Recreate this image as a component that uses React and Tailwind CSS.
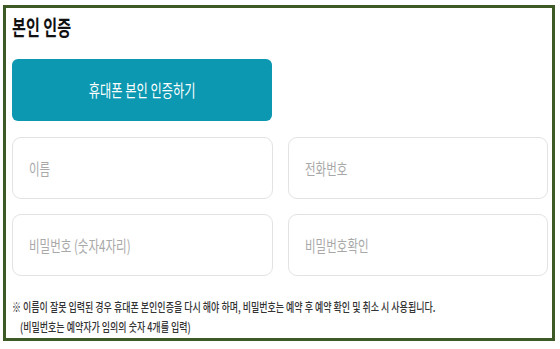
export default function App() {
    const font = {fontFamily: '"Noto Sans CJK KR", "Noto Sans", sans-serif'};
    return (
        <div className="w-[560px] h-[349px] bg-white pt-[5px] pl-[3px] overflow-hidden" style={font}>
            <div className="w-[552px] h-[336px] border-[3px] border-[#3d5a26] bg-white overflow-hidden">
                <div className="ml-[6px] w-[536px] pt-[4px]">
                    <h1 className="h-[28px] text-[21px] leading-[28px] font-bold text-[#111] whitespace-nowrap">
                        <span className="inline-block origin-left scale-x-[0.72]">본인 인증</span>
                    </h1>

                    <button className="mt-[19px] w-[260px] h-[62px] rounded-[6px] bg-[#0c98b1] text-white text-[17px] flex items-center justify-center">
                        <span className="inline-block whitespace-nowrap scale-x-[0.72]">휴대폰 본인 인증하기</span>
                    </button>

                    <div className="mt-[16px] grid grid-cols-2 gap-x-[15px] gap-y-[15px]">
                        {['이름', '전화번호', '비밀번호 (숫자4자리)', '비밀번호확인'].map(p => (
                            <div key={p} className="h-[62px] rounded-[9px] border border-[#e3e3e3] flex items-center px-[16px] text-[16px] text-[#a8a8a8] whitespace-nowrap overflow-hidden">
                                <span className="inline-block origin-left scale-x-[0.72]">{p}</span>
                            </div>
                        ))}
                    </div>

                    <div className="mt-[21px] text-[12.5px] leading-[20px] text-[#333] font-medium whitespace-nowrap overflow-hidden">
                        <p><span className="inline-block origin-left scale-x-[0.72]">※ 이름이 잘못 입력된 경우 휴대폰 본인인증을 다시 해야 하며, 비밀번호는 예약 후 예약 확인 및 취소 시 사용됩니다.</span></p>
                        <p className="pl-[8px]"><span className="inline-block origin-left scale-x-[0.72]">(비밀번호는 예약자가 임의의 숫자 4개를 입력)</span></p>
                    </div>
                </div>
            </div>
        </div>
    );
}
